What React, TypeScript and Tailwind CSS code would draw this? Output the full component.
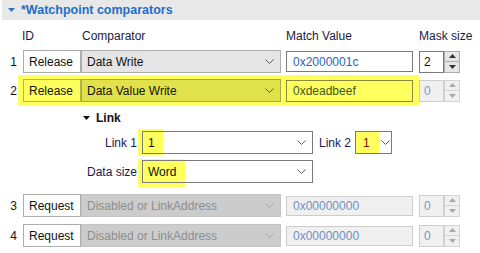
import React from "react"

type Variant = "normal" | "yellow" | "disabled" | "white"

const Chevron = ({ color = "#5a5a5a" }: { color?: string }) => (
  <svg width="9" height="5" viewBox="0 0 9 5" className="shrink-0">
    <polyline points="0.5,0.5 4.5,4.5 8.5,0.5" fill="none" stroke={color} strokeWidth="1" />
  </svg>
)

const Tri = ({ up, color }: { up?: boolean; color: string }) => (
  <svg width="7" height="4" viewBox="0 0 7 4">
    <polygon points={up ? "0,4 7,4 3.5,0" : "0,0 7,0 3.5,4"} fill={color} />
  </svg>
)

function Combo({ value, variant }: { value: string; variant: Variant }) {
  const cls = {
    normal: "bg-[#e5e5e5] border-[#adadad] text-[#111]",
    yellow: "bg-[#e1e14c] border-[#a9a93c] text-[#111]",
    disabled: "bg-[#cccccc] border-[#c4c4c4] text-[#8d8d8d]",
    white: "bg-white border-[#7a7a7a] text-[#111]",
  }[variant]
  return (
    <div className={`w-[200px] h-[23px] border flex items-center justify-between pl-[5px] pr-[6px] ${cls}`}>
      <span>{value}</span>
      <Chevron color={variant === "disabled" ? "#a6a6a6" : "#5a5a5a"} />
    </div>
  )
}

function Btn({ label, yellow }: { label: string; yellow?: boolean }) {
  return (
    <div
      className={`h-[23px] border px-[5px] flex items-center text-[#111] ${
        yellow ? "bg-[#ffff5e] border-[#b8b848]" : "bg-white border-[#adadad]"
      }`}
    >
      {label}
    </div>
  )
}

function Match({ value, variant }: { value: string; variant: "normal" | "yellow" | "disabled" }) {
  const cls = {
    normal: "h-[21px] bg-white border-[#7a7a7a] text-[#2666b8]",
    yellow: "h-[22px] bg-[#ffff5e] border-[#8a8a3c] text-[#3c5a22]",
    disabled: "h-[20px] bg-[#f0f0f0] border-[#cccccc] text-[#6f8fc4]",
  }[variant]
  return <div className={`w-[127px] border flex items-center pl-[6px] ${cls}`}>{value}</div>
}

function Spinner({ value, disabled }: { value: string; disabled?: boolean }) {
  return (
    <div className="w-[41px] h-[22px] flex">
      <div
        className={`flex-1 border flex items-center pl-[4px] ${
          disabled ? "bg-[#f0f0f0] border-[#cccccc] text-[#7f97bf]" : "bg-white border-[#7a7a7a] text-[#111]"
        }`}
      >
        {value}
      </div>
      <div className="w-[16px] flex flex-col">
        <div
          className={`flex-1 border flex items-center justify-center ${
            disabled ? "bg-[#f0f0f0] border-[#d4d4d4]" : "bg-[#e6e6e6] border-[#acacac]"
          }`}
        >
          <Tri up color={disabled ? "#a8a8a8" : "#333"} />
        </div>
        <div
          className={`flex-1 border border-t-0 flex items-center justify-center ${
            disabled ? "bg-[#f0f0f0] border-[#d4d4d4]" : "bg-[#e6e6e6] border-[#acacac]"
          }`}
        >
          <Tri color={disabled ? "#a8a8a8" : "#333"} />
        </div>
      </div>
    </div>
  )
}

function Num({ n }: { n: string }) {
  return <div className="w-[18px] text-right pr-[1px] text-[#111]">{n}</div>
}

export default function App() {
  return (
    <div
      className="w-[480px] h-[253px] bg-white overflow-hidden text-[12px] leading-none"
      style={{ fontFamily: '"Liberation Sans", Arial, sans-serif' }}
    >
      {/* section header */}
      <div className="ml-[2px] h-[20px] bg-[#e8e8e8] flex items-center">
        <div className="ml-[6px] mr-[6px]">
          <Tri color="#2f73c4" />
        </div>
        <span className="font-bold text-[#1f6fc6] text-[12.5px]">*Watchpoint comparators</span>
      </div>

      {/* column headers */}
      <div className="mt-[9px] h-[14px] flex items-center text-[#1a1a40]">
        <div className="w-[22px]" />
        <div className="w-[60px]">ID</div>
        <div className="w-[204px]">Comparator</div>
        <div className="w-[133px]">Match Value</div>
        <div>Mask size</div>
      </div>

      {/* row 1 */}
      <div className="mt-[7px] h-[23px] flex items-center">
        <Num n="1" />
        <div className="w-[5px]" />
        <div className="w-[58px]">
          <Btn label="Release" />
        </div>
        <Combo value="Data Write" variant="normal" />
        <div className="w-[5px]" />
        <Match value="0x2000001c" variant="normal" />
        <div className="w-[6px]" />
        <Spinner value="2" />
      </div>

      {/* row 2 (highlighted) */}
      <div className="mt-[2px] flex items-center">
        <Num n="2" />
        <div className="w-[401px] h-[31px] bg-[#ffff5e] flex items-center pl-[5px]">
          <div className="w-[58px]">
            <Btn label="Release" yellow />
          </div>
          <Combo value="Data Value Write" variant="yellow" />
          <div className="w-[5px]" />
          <Match value="0xdeadbeef" variant="yellow" />
        </div>
        <Spinner value="0" disabled />
      </div>

      {/* link group */}
      <div className="mt-[5px] h-[14px] flex items-center">
        <div className="ml-[83px] mr-[6px]">
          <Tri color="#111" />
        </div>
        <span className="font-bold text-[#111]">Link</span>
      </div>

      <div className="mt-[6px] h-[23px] flex items-center">
        <div className="w-[137px] text-right text-[#1a1a50]">Link 1</div>
        <div className="relative ml-[5px] w-[171px] h-[23px]">
          <div className="absolute left-[-4px] top-[-2px] w-[25px] h-[26px] bg-[#ffff5e]" />
          <div className="relative h-full border border-[#7a7a7a] flex items-center justify-between pl-[5px] pr-[6px] text-[#111]">
            <span>1</span>
            <Chevron />
          </div>
        </div>
        <div className="ml-[6px] text-[#1a1a50]">Link 2</div>
        <div className="ml-[4px] w-[37px] h-[23px] border border-[#7a7a7a] flex items-center bg-white">
          <div className="w-[23px] h-full bg-[#ffff5e] flex items-center pl-[7px] text-[#8a0a0a]">1</div>
          <div className="flex-1 flex justify-center">
            <Chevron />
          </div>
        </div>
      </div>

      <div className="mt-[6px] h-[23px] flex items-center">
        <div className="w-[137px] text-right text-[#1a1a50]">Data size</div>
        <div className="relative ml-[5px] w-[171px] h-[23px]">
          <div className="absolute left-[-4px] top-[-1px] w-[47px] h-[28px] bg-[#ffff5e]" />
          <div className="relative h-full border border-[#7a7a7a] flex items-center justify-between pl-[5px] pr-[6px] text-[#111]">
            <span>Word</span>
            <Chevron />
          </div>
        </div>
      </div>

      {/* row 3 */}
      <div className="mt-[11px] h-[23px] flex items-center">
        <Num n="3" />
        <div className="w-[5px]" />
        <div className="w-[58px]">
          <Btn label="Request" />
        </div>
        <Combo value="Disabled or LinkAddress" variant="disabled" />
        <div className="w-[5px]" />
        <Match value="0x00000000" variant="disabled" />
        <div className="w-[6px]" />
        <Spinner value="0" disabled />
      </div>

      {/* row 4 */}
      <div className="mt-[7px] h-[23px] flex items-center">
        <Num n="4" />
        <div className="w-[5px]" />
        <div className="w-[58px]">
          <Btn label="Request" />
        </div>
        <Combo value="Disabled or LinkAddress" variant="disabled" />
        <div className="w-[5px]" />
        <Match value="0x00000000" variant="disabled" />
        <div className="w-[6px]" />
        <Spinner value="0" disabled />
      </div>
    </div>
  )
}
